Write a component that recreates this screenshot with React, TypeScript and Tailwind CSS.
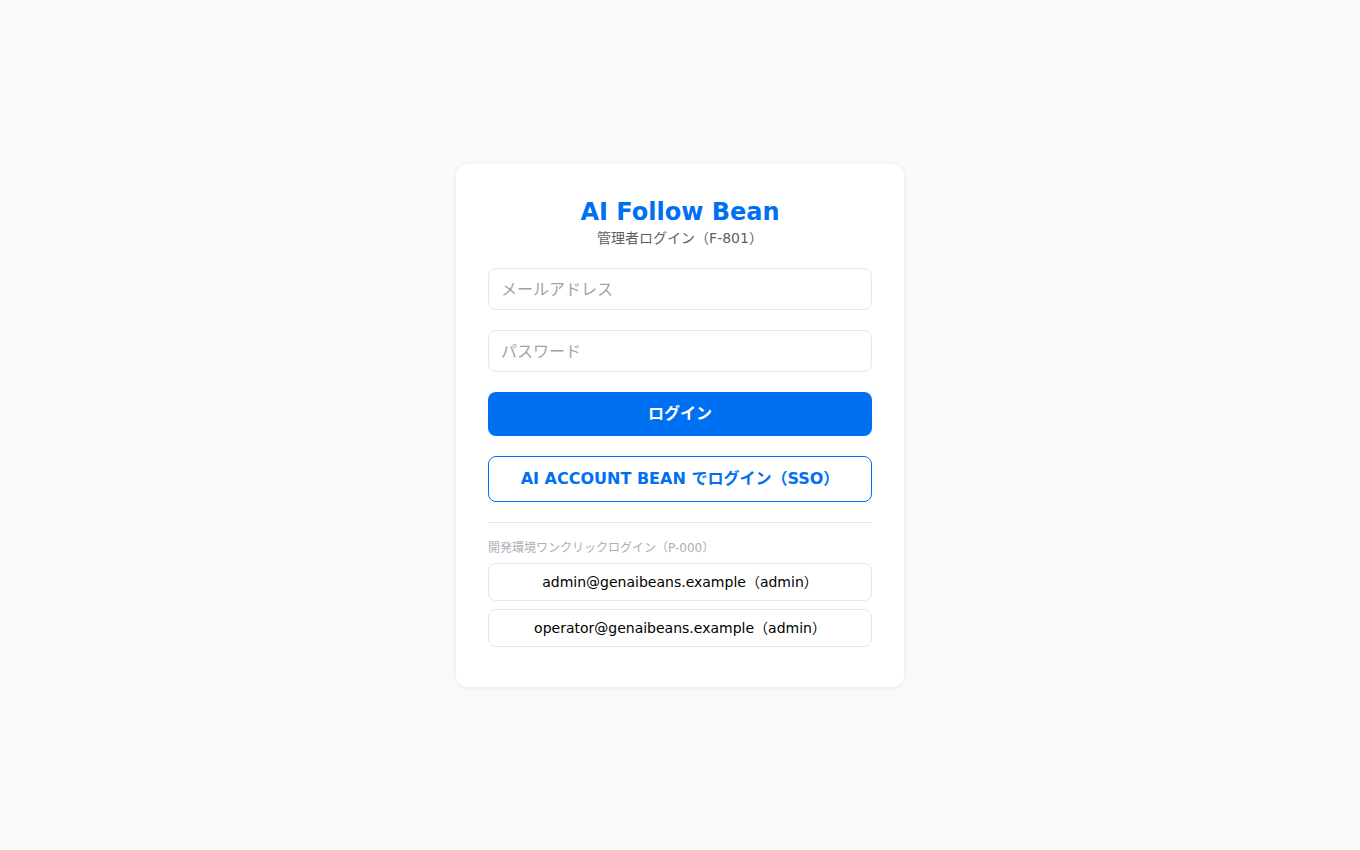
export default function App() {
  return (
    <div
      className="min-h-screen w-full bg-[#f8f9fb] flex items-start justify-center pt-[164px]"
      style={{ fontFamily: '"DejaVu Sans", "Noto Sans CJK JP", sans-serif' }}
    >
      <div className="w-[448px] bg-white rounded-xl shadow-[0_1px_4px_rgba(0,0,0,0.08)] px-8 pt-8 pb-10">
        <h1 className="text-center text-2xl leading-8 font-bold text-[#0070f3]">
          AI Follow Bean
        </h1>
        <p className="text-center text-sm leading-5 text-[#5f5f5f]">
          管理者ログイン（F-801）
        </p>

        <div className="mt-5 flex flex-col gap-5">
          <input
            type="email"
            placeholder="メールアドレス"
            className="w-full h-[42px] rounded-lg border border-[#e5e7eb] px-3 text-base text-gray-900 placeholder:text-[#9ca3af] outline-none"
          />
          <input
            type="password"
            placeholder="パスワード"
            className="w-full h-[42px] rounded-lg border border-[#e5e7eb] px-3 text-base text-gray-900 placeholder:text-[#9ca3af] outline-none"
          />
          <button className="w-full h-11 rounded-lg bg-[#0070f3] text-white text-base font-bold">
            ログイン
          </button>
          <button className="w-full h-[46px] rounded-lg border border-[#0070f3] bg-white text-[#0070f3] text-base font-bold">
            AI ACCOUNT BEAN でログイン（SSO）
          </button>
        </div>

        <div className="mt-5 border-t border-[#e5e7eb]" />

        <p className="mt-[17px] text-xs leading-4 text-[#aab0b8]">
          開発環境ワンクリックログイン（P-000）
        </p>
        <div className="mt-[7px] flex flex-col gap-2">
          <button className="w-full h-[38px] rounded-lg border border-[#e5e7eb] bg-white text-sm text-black">
            admin@genaibeans.example（admin）
          </button>
          <button className="w-full h-[38px] rounded-lg border border-[#e5e7eb] bg-white text-sm text-black">
            operator@genaibeans.example（admin）
          </button>
        </div>
      </div>
    </div>
  );
}
